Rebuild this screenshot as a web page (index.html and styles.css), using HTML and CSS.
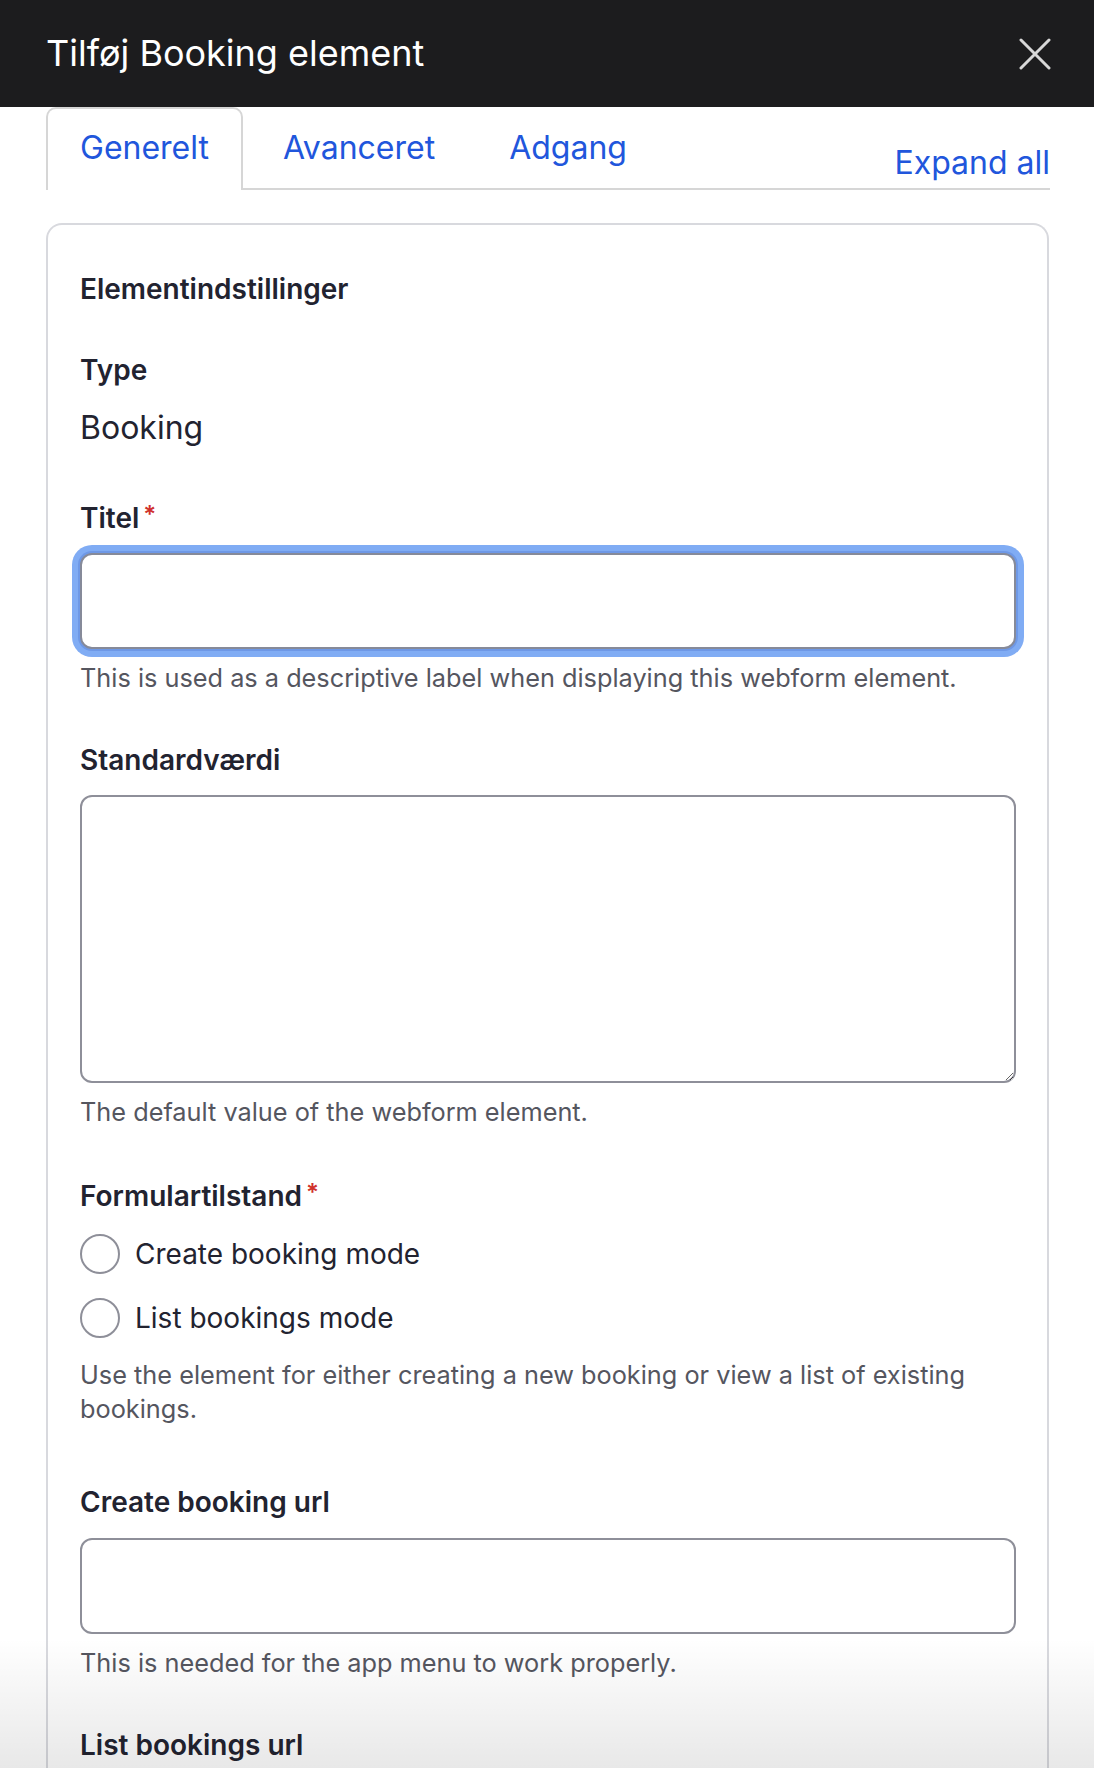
FILE: index.html
```html
<!DOCTYPE html>
<html lang="da">
<head>
<meta charset="utf-8">
<title>Tilføj Booking element</title>
<link rel="stylesheet" href="styles.css">
</head>
<body>
<header class="dialog-bar">
  <h1 class="dialog-title">Tilføj Booking element</h1>
  <button class="dialog-close" type="button" aria-label="Luk">
    <svg width="32" height="32" viewBox="0 0 32 32" aria-hidden="true">
      <path d="M2 2 L30 30 M30 2 L2 30" stroke="#d8d8d8" stroke-width="3" stroke-linecap="round" fill="none"/>
    </svg>
  </button>
</header>

<nav class="tabbar">
  <ul class="tabs">
    <li class="tab tab-active">Generelt</li>
    <li class="tab">Avanceret</li>
    <li class="tab">Adgang</li>
  </ul>
  <a class="expand-all" href="#">Expand all</a>
</nav>

<section class="card">
  <h2 class="card-heading">Elementindstillinger</h2>

  <div class="item item-type">
    <div class="label">Type</div>
    <div class="value">Booking</div>
  </div>

  <div class="item">
    <label class="label">Titel<span class="req">*</span></label>
    <input class="field field-focus" type="text">
    <div class="desc">This is used as a descriptive label when displaying this webform element.</div>
  </div>

  <div class="item item-area">
    <label class="label">Standardværdi</label>
    <textarea class="field field-area"></textarea>
    <div class="desc">The default value of the webform element.</div>
  </div>

  <div class="item">
    <div class="label">Formulartilstand<span class="req">*</span></div>
    <div class="radios">
      <label class="radio-row"><input type="radio" name="mode" class="radio"><span>Create booking mode</span></label>
      <label class="radio-row"><input type="radio" name="mode" class="radio"><span>List bookings mode</span></label>
    </div>
    <div class="desc desc-radios">Use the element for either creating a new booking or view a list of existing bookings.</div>
  </div>

  <div class="item item-wide">
    <label class="label">Create booking url</label>
    <input class="field field-url" type="text">
    <div class="desc">This is needed for the app menu to work properly.</div>
  </div>

  <div class="item">
    <label class="label">List bookings url</label>
    <input class="field" type="text">
    <div class="desc">This is needed for the app menu to work properly.</div>
  </div>
</section>

<div class="fade"></div>
</body>
</html>
```

FILE: styles.css
```css
html, body {
  margin: 0;
  padding: 0;
  background: #ffffff;
}

body {
  font-family: "Inter", "Liberation Sans", sans-serif;
  color: #222330;
  overflow: hidden;
  height: 1768px;
  position: relative;
}

.dialog-bar {
  height: 107px;
  background: #1c1c1e;
  display: flex;
  align-items: center;
  justify-content: space-between;
  padding: 0 43px 0 46px;
  box-sizing: border-box;
}

.dialog-title {
  margin: 0 0 2px;
  font-size: 36px;
  font-weight: 400;
  line-height: 44px;
  color: #ffffff;
}

.dialog-close {
  background: none;
  border: 0;
  padding: 0;
  width: 32px;
  height: 32px;
  display: flex;
}

.tabbar {
  display: flex;
  align-items: flex-end;
  margin: 0 44px 0 46px;
  border-bottom: 2px solid #d6d6d6;
}

.tabs {
  list-style: none;
  margin: 0;
  padding: 0;
  display: flex;
  gap: 6px;
}

.tab {
  font-size: 32px;
  line-height: 38px;
  color: #2156dc;
  padding: 20px 32px 23px;
  border: 2px solid transparent;
  border-bottom: 0;
  margin-bottom: -2px;
  border-radius: 10px 10px 0 0;
}

.tab-active {
  border-color: #d6d6d6;
  background: #ffffff;
}

.expand-all {
  margin-left: auto;
  margin-bottom: 6px;
  font-size: 32px;
  line-height: 38px;
  color: #2156dc;
  text-decoration: none;
}

.card {
  display: flex;
  flex-direction: column;
  margin: 33px 45px 0 46px;
  border: 2px solid #d8d9de;
  border-bottom: 0;
  border-radius: 16px 16px 0 0;
  padding: 46px 31px 200px 32px;
}

.card-heading {
  margin: 0 0 45px;
  font-size: 28px;
  line-height: 36px;
  font-weight: 600;
}

.item {
  display: flex;
  flex-direction: column;
  margin-bottom: 47px;
}

.item-type {
  margin-bottom: 52px;
}

.item-type .label {
  margin-bottom: 20px;
}

.item-area {
  margin-bottom: 49px;
}

.item-wide {
  padding-top: 11px;
}

.label {
  height: 36px;
  font-size: 28px;
  line-height: 36px;
  font-weight: 600;
  color: #222330;
  margin-bottom: 17px;
}

.value {
  font-size: 32px;
  line-height: 40px;
}

.req {
  display: inline-block;
  vertical-align: top;
  font-size: 24px;
  line-height: 24px;
  padding-top: 3px;
  margin-left: 4px;
  color: #d0312d;
  font-weight: 600;
}

.field {
  display: block;
  box-sizing: border-box;
  width: 100%;
  height: 96px;
  margin: 0;
  border: 2px solid #8e8f99;
  border-radius: 12px;
  background: #ffffff;
  font-family: inherit;
  font-size: 28px;
  outline: none;
}

.field-focus {
  border-color: #868a99;
  box-shadow: 0 0 0 2px #6e98e6, 0 0 0 8px #80acf4;
}

.field-area {
  height: 288px;
  resize: vertical;
}

.field-url {
  margin-top: 1px;
}

.desc {
  margin-top: 12px;
  font-size: 25.3px;
  line-height: 34px;
  color: #55565f;
}

.radios {
  display: flex;
  flex-direction: column;
  gap: 24px;
  margin-top: 3px;
}

.radio-row {
  display: flex;
  align-items: center;
  gap: 15px;
  height: 40px;
  font-size: 28px;
  line-height: 36px;
  color: #222330;
}

.radio {
  appearance: none;
  -webkit-appearance: none;
  margin: 0;
  width: 40px;
  height: 40px;
  border: 2px solid #8e8f99;
  border-radius: 50%;
  background: #ffffff;
  flex: none;
}

.desc-radios {
  margin-top: 20px;
}

.fade {
  position: absolute;
  left: 0;
  right: 0;
  bottom: 0;
  height: 130px;
  background: linear-gradient(to bottom, rgba(0, 0, 0, 0), rgba(0, 0, 0, 0.09));
  pointer-events: none;
}
```
